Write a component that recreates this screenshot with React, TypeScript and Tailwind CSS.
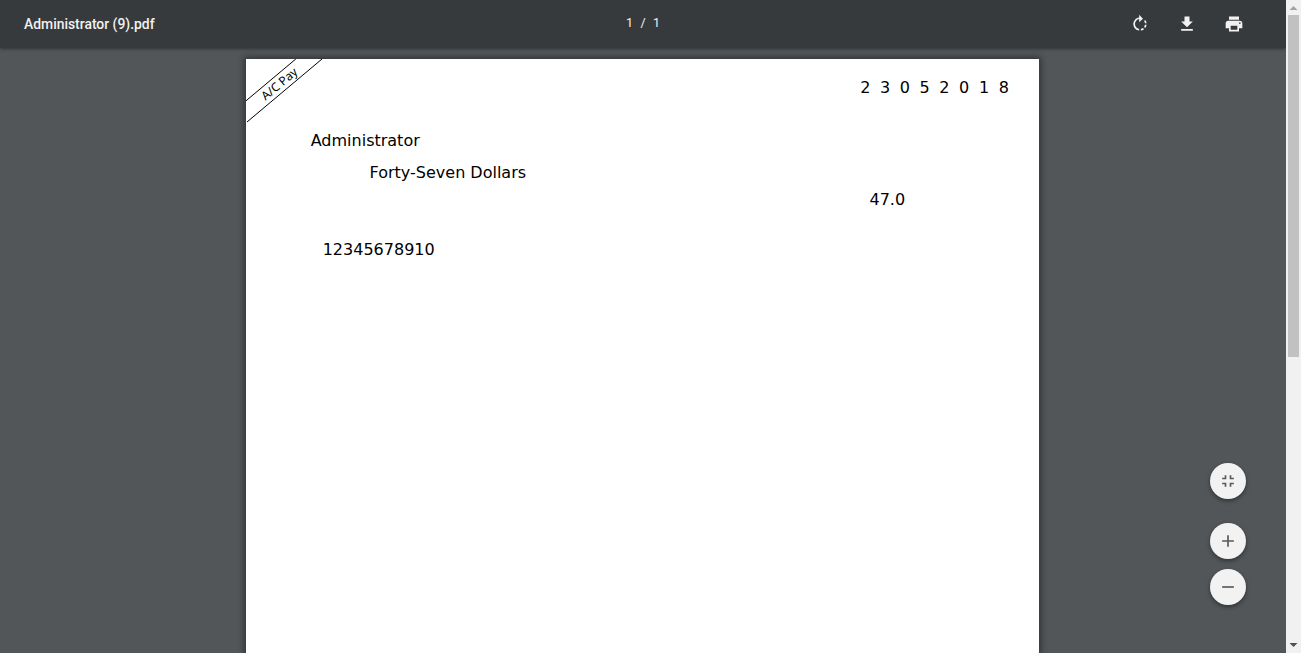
import type { ReactNode } from "react";

const icons = {
  rotate:
    "M15.55 5.55L11 1v3.07C7.06 4.56 4 7.92 4 12s3.05 7.44 7 7.93v-2.02c-2.84-.48-5-2.94-5-5.91s2.16-5.43 5-5.91V10l4.55-4.45zM19.93 11c-.17-1.39-.72-2.73-1.62-3.89l-1.42 1.42c.54.75.88 1.6 1.02 2.47h2.02zM13 17.9v2.02c1.39-.17 2.74-.71 3.9-1.61l-1.44-1.44c-.75.54-1.59.89-2.46 1.03zm3.89-2.42l1.42 1.41c.9-1.16 1.45-2.5 1.62-3.89h-2.02c-.14.87-.48 1.72-1.02 2.48z",
  download: "M19 9h-4V3H9v6H5l7 7 7-7zM5 18v2h14v-2H5z",
  print:
    "M19 8H5c-1.66 0-3 1.34-3 3v6h4v4h12v-4h4v-6c0-1.66-1.34-3-3-3zm-3 11H8v-5h8v5zm3-7c-.55 0-1-.45-1-1s.45-1 1-1 1 .45 1 1-.45 1-1 1zm-1-9H6v4h12V3z",
  fit: "M5 16h3v3h2v-5H5v2zm3-8H5v2h5V5H8v3zm6 11h2v-3h3v-2h-5v5zm2-11V5h-2v5h5V8h-3z",
  plus: "M19 13h-6v6h-2v-6H5v-2h6V5h2v6h6v2z",
  minus: "M19 13H5v-2h14v2z",
};

function Icon({ d, className }: { d: string; className: string }) {
  return (
    <svg viewBox="0 0 24 24" fill="currentColor" className={className}>
      <path d={d} />
    </svg>
  );
}

function ToolbarButton({ label, children }: { label: string; children: ReactNode }) {
  return (
    <button aria-label={label} className="flex size-8 items-center justify-center">
      {children}
    </button>
  );
}

function RoundButton({ label, d, className = "" }: { label: string; d: string; className?: string }) {
  return (
    <button
      aria-label={label}
      className={`flex size-9 items-center justify-center rounded-full bg-[#f2f2f2] text-[#5a5a5a] shadow-[0_2px_4px_rgba(0,0,0,0.4)] ${className}`}
    >
      <Icon d={d} className="size-5" />
    </button>
  );
}

function Cheque() {
  return (
    <section className="relative flex h-[594px] w-[793px] shrink-0 flex-col bg-white font-['DejaVu_Sans',sans-serif] text-base leading-5 text-black shadow-[0_0_6px_2px_rgba(0,0,0,0.4)]">
      <svg className="absolute left-0 top-0 h-[66px] w-[80px]" viewBox="0 0 80 66">
        <path d="M0 41.8L49.8 0M1 63L76 0" stroke="#000" strokeWidth="1" fill="none" />
      </svg>
      <span className="absolute left-3 top-[17px] -rotate-40 whitespace-nowrap font-['Noto_Sans',sans-serif] text-[12px] leading-4">
        A/C Pay
      </span>
      <div className="mt-[19px] flex justify-end pr-[26.5px]">
        {"23052018".split("").map((digit, i) => (
          <span key={i} className="w-[19.8px] pl-[6px]">
            {digit}
          </span>
        ))}
      </div>
      <div className="mt-[33px] pl-[64.7px]">Administrator</div>
      <div className="mt-3 pl-[123.6px]">Forty-Seven Dollars</div>
      <div className="mt-[7px] pl-[623.5px]">47.0</div>
      <div className="mt-[30px] pl-[76.7px]">12345678910</div>
    </section>
  );
}

export default function App() {
  return (
    <div className="flex h-[653px] w-[1301px] overflow-hidden bg-[#525659] font-['Roboto',sans-serif]">
      <main className="relative flex h-full w-[1286px] flex-col overflow-hidden">
        <header className="z-10 grid h-12 shrink-0 grid-cols-3 items-center bg-[#373a3c] text-[#f1f1f1] shadow-[0_1px_3px_rgba(0,0,0,0.4)]">
          <h1 className="pl-6 text-[13.9px] font-medium">Administrator (9).pdf</h1>
          <div className="flex justify-center gap-[7.5px] pb-0.5 text-[12.5px]">
            <span>1</span>
            <span>/</span>
            <span>1</span>
          </div>
          <nav className="flex justify-end gap-[15px] pr-9">
            <ToolbarButton label="Rotate clockwise">
              <Icon d={icons.rotate} className="size-5" />
            </ToolbarButton>
            <ToolbarButton label="Download">
              <Icon d={icons.download} className="size-5" />
            </ToolbarButton>
            <ToolbarButton label="Print">
              <Icon d={icons.print} className="size-5" />
            </ToolbarButton>
          </nav>
        </header>
        <div className="flex justify-center pr-px pt-[11px]">
          <Cheque />
        </div>
        <aside className="absolute bottom-12 right-10 flex flex-col">
          <RoundButton label="Fit to page" d={icons.fit} />
          <RoundButton label="Zoom in" d={icons.plus} className="mt-6" />
          <RoundButton label="Zoom out" d={icons.minus} className="mt-2.5" />
        </aside>
      </main>
      <div className="flex h-full w-[15px] flex-col items-center bg-[#f1f1f1]">
        <svg viewBox="0 0 15 15" className="h-[15px] w-[15px] shrink-0">
          <path d="M3.5 10L7.5 6l4 4z" fill="#a3a3a3" />
        </svg>
        <div className="h-[342px] w-[11px] bg-[#c1c1c1]" />
        <svg viewBox="0 0 15 15" className="mt-auto h-[15px] w-[15px] shrink-0">
          <path d="M3.5 5l4 4 4-4z" fill="#505050" />
        </svg>
      </div>
    </div>
  );
}
